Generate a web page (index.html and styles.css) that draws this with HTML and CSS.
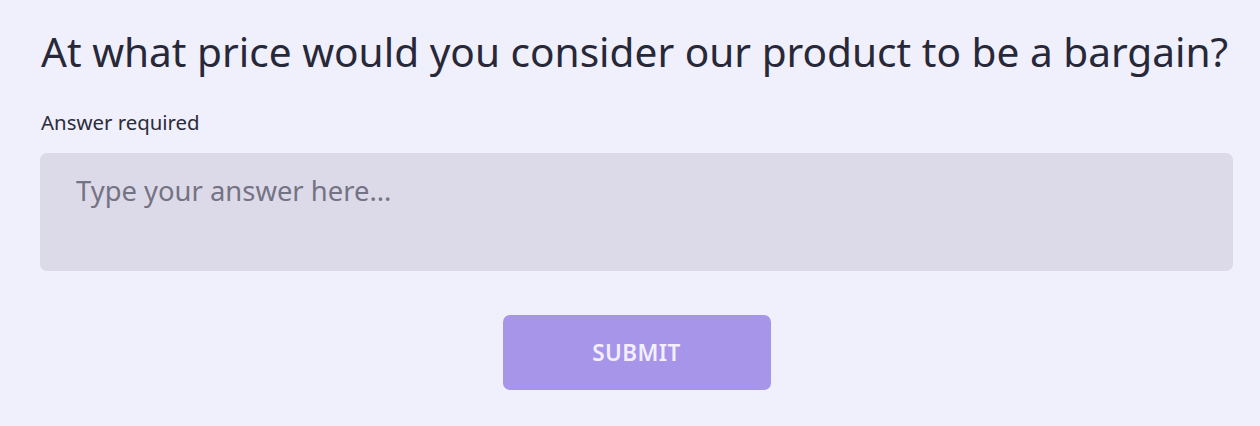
FILE: index.html
```html
<!DOCTYPE html>
<html>
<head>
<meta charset="utf-8">
<link rel="stylesheet" href="styles.css">
</head>
<body>
<main class="question">
  <h1 class="title">At what price would you consider our product to be a bargain?</h1>
  <div class="label">Answer required</div>
  <textarea class="answer" placeholder="Type your answer here..."></textarea>
  <div class="actions">
    <button class="submit">SUBMIT</button>
  </div>
</main>
</body>
</html>
```
FILE: styles.css
```css
html, body {
  margin: 0;
  padding: 0;
  background: #f0effc;
  height: 100%;
}
body {
  font-family: "Noto Sans", "Open Sans", sans-serif;
  color: #272838;
}
.question {
  padding: 24px 27px 0 40px;
  display: flex;
  flex-direction: column;
}
.title {
  margin: 0 0 0 1px;
  font-size: 40.6px;
  font-weight: 400;
  line-height: 56px;
  white-space: nowrap;
  color: #272838;
}
.label {
  margin: 28px 0 0 1px;
  font-size: 20.4px;
  line-height: 28px;
  color: #2b2c3a;
}
.answer {
  margin-top: 17px;
  height: 118px;
  box-sizing: border-box;
  border: none;
  border-radius: 7px;
  background: #dcdae8;
  padding: 19px 36px;
  font-family: inherit;
  font-size: 27.4px;
  resize: none;
  outline: none;
}
.answer::placeholder {
  color: #747384;
}
.actions {
  display: flex;
  justify-content: center;
  margin-top: 44px;
}
.submit {
  width: 268px;
  height: 75px;
  border: none;
  border-radius: 7px;
  background: #a795ea;
  color: #f3efff;
  font-family: inherit;
  font-size: 22.5px;
  font-weight: 600;
  letter-spacing: 0.4px;
}
```
